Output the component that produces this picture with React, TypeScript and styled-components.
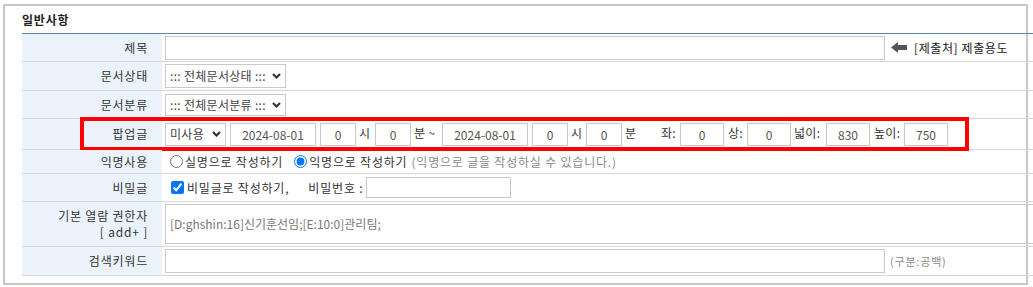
import React from 'react'
import styled, { createGlobalStyle } from 'styled-components'

const GlobalStyle = createGlobalStyle`
  html, body {
    margin: 0;
    padding: 0;
    overflow: hidden;
    background: #fff;
  }
  body {
    font-family: "Noto Sans CJK KR", "Noto Sans", sans-serif;
    font-size: 12px;
    letter-spacing: 0.8px;
    color: #333;
  }
`

const Frame = styled.div`
  position: relative;
  box-sizing: border-box;
  width: 1025px;
  height: 281px;
  margin: 4px 0 0 3px;
  border: 2px solid #c8c8c8;
  padding-left: 17px;
`

const Title = styled.div`
  height: 27px;
  display: flex;
  align-items: center;
  font-size: 12px;
  font-weight: bold;
  color: #222;
`

const Table = styled.div`
  width: 1020px;
  border-top: 1px solid #5b84ad;
`

const Row = styled.div<{ $h: number }>`
  position: relative;
  box-sizing: border-box;
  display: grid;
  grid-template-columns: 140px 1fr;
  height: ${(p) => p.$h}px;
  border-bottom: 1px solid #d6d6d6;
`

const Label = styled.div`
  background: #eaf3fb;
  display: flex;
  flex-direction: column;
  justify-content: center;
  align-items: flex-end;
  padding-right: 14px;
  line-height: 16px;
  color: #333;
`

const Value = styled.div`
  display: flex;
  align-items: center;
  padding-left: 3px;
  line-height: 16px;
  white-space: nowrap;
`

const TextInput = styled.input<{ $w: number; $h?: number }>`
  box-sizing: border-box;
  width: ${(p) => p.$w}px;
  height: ${(p) => p.$h ?? 23}px;
  margin: 0;
  padding: 0;
  border: 1px solid #c9c9c9;
  border-radius: 0;
  background: #fff;
  font-family: inherit;
  font-size: 12px;
  letter-spacing: 0;
  color: #555;
  text-align: center;
  outline: none;
`

const Select = styled.div<{ $w: number; $h?: number }>`
  box-sizing: border-box;
  width: ${(p) => p.$w}px;
  height: ${(p) => p.$h ?? 23}px;
  display: flex;
  align-items: center;
  justify-content: space-between;
  padding: 0 4px 0 4px;
  border: 1px solid #c9c9c9;
  background: #fff;
  color: #444;
  font-size: 12px;
  letter-spacing: 0.3px;
`

const Gap = styled.span<{ $w: number; $pl?: number }>`
  box-sizing: border-box;
  display: inline-block;
  width: ${(p) => p.$w}px;
  padding-left: ${(p) => p.$pl ?? 0}px;
  color: #333;
  margin-top: -3px;
  letter-spacing: 0.3px;
`

const Spacer = styled.span<{ $w: number }>`
  display: inline-block;
  width: ${(p) => p.$w}px;
`

const Radio = styled.input.attrs({ type: 'radio' })<{ $ml?: number }>`
  width: 13px;
  height: 13px;
  margin: 0 2px 0 ${(p) => p.$ml ?? 5}px;
`

const Check = styled.input.attrs({ type: 'checkbox' })`
  width: 13px;
  height: 13px;
  margin: 0 3px 0 6px;
`

const Help = styled.span<{ $ml?: number; $size?: number }>`
  margin-left: ${(p) => p.$ml ?? 0}px;
  color: #8a8a8a;
  font-size: ${(p) => p.$size ?? 12}px;
`

const Note = styled.span`
  color: #222;
  font-size: 12px;
  letter-spacing: 0.6px;
`

const AuthBox = styled.div`
  box-sizing: border-box;
  flex: 1;
  height: 40px;
  margin-right: 4px;
  border: 1px solid #c9c9c9;
  display: flex;
  align-items: center;
  padding-left: 4px;
  color: #777;
  letter-spacing: 0;
`

const Annotation = styled.div`
  position: absolute;
  left: 58px;
  top: -2px;
  width: 889px;
  height: 34px;
  box-sizing: border-box;
  border: 4px solid #ff0000;
  pointer-events: none;
`

function Chevron() {
  return (
    <svg width="9" height="6" viewBox="0 0 9 6">
      <polyline points="1,1 4.5,4.5 8,1" fill="none" stroke="#333" strokeWidth="2.2" />
    </svg>
  )
}

function LeftArrow() {
  return (
    <svg width="16" height="11" viewBox="0 0 16 11" style={{ margin: '0 7px 0 6px' }}>
      <polygon points="0,5.5 7,0 7,3 16,3 16,8 7,8 7,11" fill="#555" />
    </svg>
  )
}

export default function App() {
  return (
    <>
      <GlobalStyle />
      <Frame>
        <Title>일반사항</Title>
        <Table>
          <Row $h={28}>
            <Label>제목</Label>
            <Value>
              <TextInput $w={720} $h={24} />
              <LeftArrow />
              <Note>[제출처] 제출용도</Note>
            </Value>
          </Row>
          <Row $h={29}>
            <Label>문서상태</Label>
            <Value>
              <Select $w={121} $h={24}>
                <span>::: 전체문서상태 :::</span>
                <Chevron />
              </Select>
            </Value>
          </Row>
          <Row $h={28}>
            <Label>문서분류</Label>
            <Value>
              <Select $w={121} $h={22}>
                <span>::: 전체문서분류 :::</span>
                <Chevron />
              </Select>
            </Value>
          </Row>
          <Row $h={31}>
            <Label>팝업글</Label>
            <Value>
              <Select $w={61}>
                <span>미사용</span>
                <Chevron />
              </Select>
              <Spacer $w={4} />
              <TextInput $w={86} defaultValue="2024-08-01" />
              <Spacer $w={4} />
              <TextInput $w={36} defaultValue="0" />
              <Gap $w={19} $pl={3}>시</Gap>
              <TextInput $w={36} defaultValue="0" />
              <Gap $w={31} $pl={3}>분 ~</Gap>
              <TextInput $w={86} defaultValue="2024-08-01" />
              <Spacer $w={4} />
              <TextInput $w={36} defaultValue="0" />
              <Gap $w={18} $pl={3}>시</Gap>
              <TextInput $w={36} defaultValue="0" />
              <Gap $w={39} $pl={3}>분</Gap>
              <Gap $w={19}>좌:</Gap>
              <TextInput $w={44} defaultValue="0" />
              <Gap $w={23} $pl={4}>상:</Gap>
              <TextInput $w={44} defaultValue="0" />
              <Gap $w={35} $pl={3}>넓이:</Gap>
              <TextInput $w={44} defaultValue="830" />
              <Gap $w={34} $pl={4}>높이:</Gap>
              <TextInput $w={44} defaultValue="750" />
            </Value>
            <Annotation />
          </Row>
          <Row $h={24}>
            <Label>익명사용</Label>
            <Value>
              <Radio name="anon" />
              <span>실명으로 작성하기</span>
              <Radio name="anon" $ml={11} defaultChecked />
              <span>익명으로 작성하기</span>
              <Help $ml={4}>(익명으로 글을 작성하실 수 있습니다.)</Help>
            </Value>
          </Row>
          <Row $h={28}>
            <Label>비밀글</Label>
            <Value>
              <Check defaultChecked />
              <span>비밀글로 작성하기,</span>
              <Spacer $w={19} />
              <span>비밀번호 :</span>
              <Spacer $w={3} />
              <TextInput $w={145} $h={21} />
            </Value>
          </Row>
          <Row $h={45}>
            <Label>
              <span>기본 열람 권한자</span>
              <span>[ add+ ]</span>
            </Label>
            <Value>
              <AuthBox>[D:ghshin:16]신기훈선임;[E:10:0]관리팀;</AuthBox>
            </Value>
          </Row>
          <Row $h={29}>
            <Label>검색키워드</Label>
            <Value>
              <TextInput $w={720} $h={24} />
              <Help $ml={5} $size={11}>(구분:공백)</Help>
            </Value>
          </Row>
        </Table>
      </Frame>
    </>
  )
}
